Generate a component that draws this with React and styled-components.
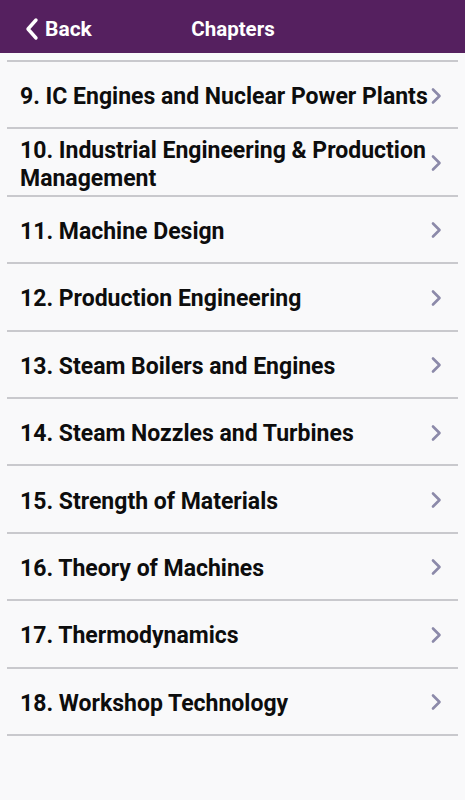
import React from 'react';
import styled, { createGlobalStyle } from 'styled-components';

const chapters = [
  '9. IC Engines and Nuclear Power Plants',
  '10. Industrial Engineering & Production Management',
  '11. Machine Design',
  '12. Production Engineering',
  '13. Steam Boilers and Engines',
  '14. Steam Nozzles and Turbines',
  '15. Strength of Materials',
  '16. Theory of Machines',
  '17. Thermodynamics',
  '18. Workshop Technology',
];

const App = () => {
  return (
    <Page>
      <GlobalStyle />
      <Header>
        <BackButton>
          <svg width="16" height="24" viewBox="0 0 16 24">
            <path d="M12 3 L4 12 L12 21" fill="none" stroke="#fff" strokeWidth="3.4" strokeLinecap="round" strokeLinejoin="round" />
          </svg>
          Back
        </BackButton>
        <Title>Chapters</Title>
      </Header>
      <List>
        {chapters.map((name) => (
          <Row key={name}>
            <Label>{name}</Label>
            <Chevron width="12" height="18" viewBox="0 0 12 18">
              <path d="M3 2.5 L9.5 9 L3 15.5" fill="none" stroke="#8c8aa9" strokeWidth="2.6" strokeLinecap="round" strokeLinejoin="round" />
            </Chevron>
          </Row>
        ))}
      </List>
    </Page>
  );
};

export default App;

const GlobalStyle = createGlobalStyle`
  html, body {
    margin: 0;
    padding: 0;
    background: #f9f9fa;
  }
  * { box-sizing: border-box; }
`;

const Page = styled.div`
  width: 465px;
  height: 800px;
  background: #f9f9fa;
  font-family: Roboto, 'Liberation Sans', sans-serif;
  overflow: hidden;
`;

const Header = styled.div`
  height: 53px;
  background: #55205f;
  position: relative;
  display: flex;
  align-items: center;
  justify-content: center;
  color: #fff;
  padding-top: 4px;
`;

const BackButton = styled.div`
  position: absolute;
  left: 24px;
  top: 17px;
  display: flex;
  align-items: center;
  gap: 5px;
  font-size: 21px;
  font-weight: 700;
`;

const Title = styled.div`
  font-size: 20.5px;
  font-weight: 700;
  margin-left: 1px;
`;

const List = styled.div`
  margin: 7px 7px 0;
  border-top: 2px solid #c9c9cd;
`;

const Row = styled.div`
  height: 67.4px;
  display: flex;
  align-items: center;
  padding: 0 16px 0 13px;
  border-bottom: 2px solid #c9c9cd;
`;

const Label = styled.div`
  flex: 1;
  min-width: 0;
  font-size: 23px;
  font-weight: 700;
  color: #0d0d0d;
  line-height: 28px;
  padding-top: 5px;
`;

const Chevron = styled.svg`
  flex-shrink: 0;
  margin-top: 2px;
`;
